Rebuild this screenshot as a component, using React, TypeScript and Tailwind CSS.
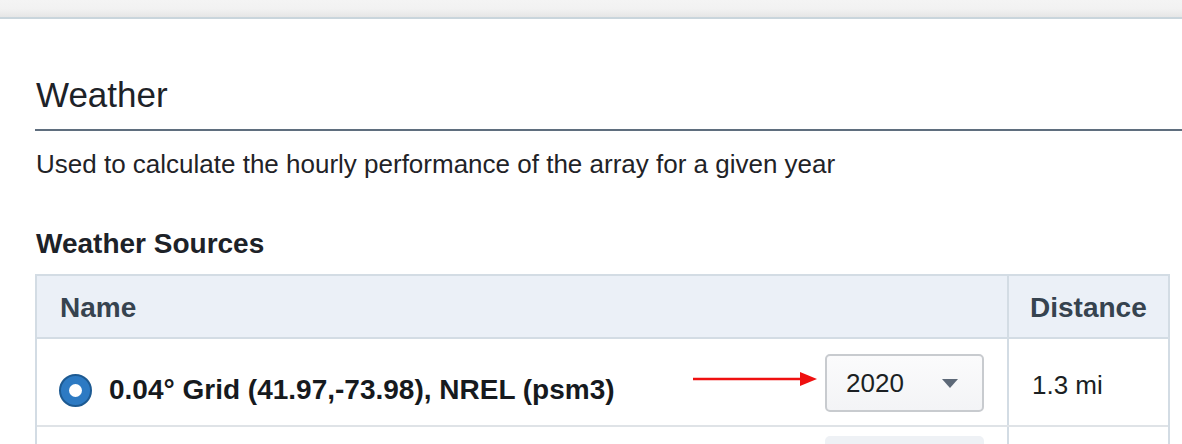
export default function App() {
  const font = { fontFamily: '"Liberation Sans", Arial, Helvetica, sans-serif' };
  return (
    <div className="w-[1182px] h-[444px] overflow-hidden bg-white" style={font}>
      {/* top strip */}
      <div className="h-[19px] bg-gradient-to-b from-[#f4f4f4] via-[#f2f2f2] to-[#e6e6e6] border-b-2 border-[#c9d5dc]" />

      <div className="pl-[35px]">
        <h2 className="mt-[55px] pb-[13px] border-b-2 border-[#5f6e7e] text-[35px] leading-[42px] text-[#1d2228] pl-[1px]">
          Weather
        </h2>

        <p className="mt-[18px] pl-[1px] text-[26px] leading-[31px] text-[#1f2327]">
          Used to calculate the hourly performance of the array for a given year
        </p>

        <h3 className="mt-[47px] pl-[1px] text-[28px] leading-[34px] font-bold text-[#1d2228]">
          Weather Sources
        </h3>

        <div className="mt-[13px] w-[1135px] border-2 border-b-0 border-[#d3dce4]">
          <div className="flex h-[63px] bg-[#ebf0f7] border-b-2 border-[#d3dce4]">
            <div className="w-[970px] pl-[23px] pt-[3px] flex items-center text-[28px] font-bold text-[#36434f]">
              Name
            </div>
            <div className="flex-1 border-l-2 border-[#d3dce4] pl-[21px] pt-[3px] flex items-center text-[28px] font-bold text-[#36434f]">
              Distance
            </div>
          </div>

          <div className="flex h-[88px] border-b-2 border-[#dfe3e7]">
            <div className="w-[970px] pl-[22px] pr-[23px] flex items-center">
              <span className="w-[33px] h-[33px] rounded-full bg-[#2d7ac3] border-2 border-[#1d5a92] flex items-center justify-center mt-[16px]">
                <span className="w-[13px] h-[13px] rounded-full bg-white" />
              </span>
              <span className="ml-[17px] mt-[16px] text-[28px] font-bold text-[#161a1e]">
                0.04° Grid (41.97,-73.98), NREL (psm3)
              </span>
              <div className="ml-auto flex items-center mt-[2px]">
                <svg width="124" height="14" viewBox="0 0 124 14" className="mr-[8px] mt-[-8px]">
                  <line x1="0" y1="7" x2="110" y2="7" stroke="#ef1010" strokeWidth="2.5" />
                  <polygon points="107,0 124,7 107,14" fill="#ef1010" />
                </svg>
                <div className="w-[159px] h-[58px] rounded-[5px] border-2 border-[#c8cbcf] bg-gradient-to-b from-[#fbfbfc] to-[#f3f4f6] flex items-center pl-[19px] pr-[24px] text-[26px] text-[#1b1f23]">
                  <span>2020</span>
                  <svg width="16" height="9" viewBox="0 0 16 9" className="ml-auto">
                    <polygon points="0,0 16,0 8,9" fill="#5d6978" />
                  </svg>
                </div>
              </div>
            </div>
            <div className="flex-1 border-l-2 border-[#d3dce4] pl-[23px] pt-[6px] flex items-center text-[26px] text-[#1b1f23]">
              1.3 mi
            </div>
          </div>

          <div className="flex h-[60px]">
            <div className="w-[970px] pr-[23px] flex justify-end pt-[9px]">
              <div className="w-[159px] h-[58px] rounded-[5px] bg-[#eef1f5]" />
            </div>
            <div className="flex-1 border-l-2 border-[#d3dce4]" />
          </div>
        </div>
      </div>
    </div>
  );
}
